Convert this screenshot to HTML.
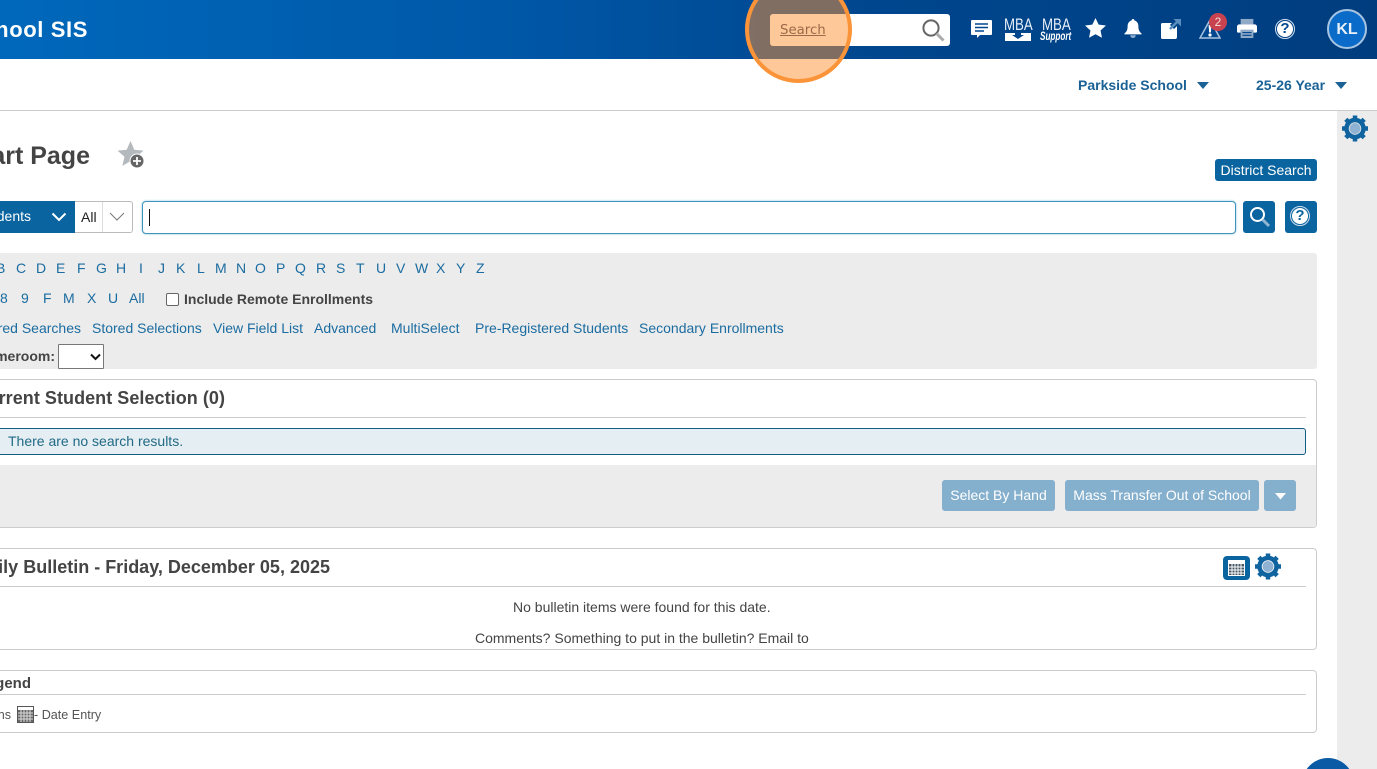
<!DOCTYPE html>
<html><head><meta charset="utf-8"><style>
html,body{margin:0;padding:0;width:1377px;height:769px;overflow:hidden;background:#fff;font-family:"Liberation Sans",sans-serif;color:#444}
#p{position:absolute;left:0;top:0;width:1377px;height:769px;overflow:hidden;background:#fff}
.a{position:absolute;white-space:nowrap}
.l{position:absolute;white-space:nowrap;color:#1b6ca0;font-size:14px;line-height:16px}
.box{position:absolute;border:1px solid #ccc;border-radius:4px;box-sizing:border-box;background:#fff}
.hr{position:absolute;height:1px;background:#ccc}
.btn{position:absolute;background:#84afcd;border-radius:3px;color:#fff;font-size:14px;text-align:center;height:31px;line-height:31px}
svg{position:absolute;display:block}
</style></head><body><div id="p">
<div class="a" style="left:0;top:0;width:1377px;height:59px;background:linear-gradient(90deg,#0068bb 0,#0058a8 500px,#00478f 850px,#003d7f 1377px)"></div>
<div class="a" style="right:1289px;top:16px;font-size:22px;line-height:27px;font-weight:bold;color:#fff;letter-spacing:.6px">School SIS</div>

<div class="a" style="left:770px;top:14px;width:180px;height:32px;background:#fff;border-radius:3px"></div>
<svg style="left:920px;top:17px" width="26" height="26" viewBox="0 0 26 26"><circle cx="11" cy="11" r="7.600" fill="none" stroke="#666" stroke-width="2"/><path d="M16.500 16.500l7 7" stroke="#aaa" stroke-width="3"/></svg>

<svg style="left:971px;top:20px" width="21" height="19" viewBox="0 0 21 19"><path d="M1 0h19a1 1 0 0 1 1 1v13a1 1 0 0 1-1 1H9l-3 3v-3H1a1 1 0 0 1-1-1V1a1 1 0 0 1 1-1z" fill="#fff"/><path d="M4 4h13M4 7.500h13M4 11h9" stroke="#00478f" stroke-width="1.600"/></svg>
<div class="a" style="left:1004px;top:16px;color:#e6eff8;font-size:17px;line-height:17px;transform:scaleX(.78);transform-origin:0 0">MBA</div>
<svg style="left:1005px;top:33px" width="26" height="8" viewBox="0 0 26 8"><rect width="26" height="8" fill="#fff"/><path d="M10 0h6v2h3l-6 4-6-4h3z" fill="#00478f"/></svg>
<div class="a" style="left:1042px;top:16px;color:#e6eff8;font-size:17px;line-height:17px;transform:scaleX(.78);transform-origin:0 0">MBA</div>
<div class="a" style="left:1040px;top:30px;color:#fff;font-size:12px;line-height:13px;font-weight:bold;font-style:italic;transform:scaleX(.68);transform-origin:0 0">Support</div>

<svg style="left:1085px;top:18px" width="21" height="20" viewBox="0 0 22 21"><path d="M11 0l3.300 7 7.700.9-5.700 5.200 1.500 7.600L11 17l-6.800 3.700 1.500-7.600L0 7.900 7.700 7z" fill="#fff"/></svg>
<svg style="left:1124px;top:18px" width="18" height="21" viewBox="0 0 20 21"><path d="M10 0c1 0 1.500.7 1.500 1.500C14.500 2.300 16 5 16 8c0 4 1 6 3.500 8v1H.5v-1C3 14 4 12 4 8c0-3 1.500-5.700 4.500-6.500C8.500.7 9 0 10 0z" fill="#fff"/><path d="M7 18h6c0 2-1.300 3-3 3s-3-1-3-3z" fill="#8fb0d0"/></svg>
<svg style="left:1160px;top:18px" width="22" height="22" viewBox="0 0 22 22"><path d="M2.500 5H12l-2 2 4 4 3-3v11a2 2 0 0 1-2 2H2.500A1.500 1.500 0 0 1 1 19.500v-13A1.500 1.500 0 0 1 2.500 5z" fill="#fff"/><path d="M10 11l9-9" stroke="#5a8ebf" stroke-width="2.500"/><path d="M13.500 1H21v7.500z" fill="#5a8ebf"/></svg>
<svg style="left:1199px;top:18px" width="22" height="21" viewBox="0 0 22 21"><path d="M11 2L1 20h20z" fill="#00478f" stroke="#a9c4de" stroke-width="1.500"/><path d="M9.600 7h2.800l-.5 7.500h-1.800z" fill="#fff"/><circle cx="11" cy="17" r="1.600" fill="#fff"/></svg>
<div class="a" style="left:1209px;top:13px;width:18px;height:18px;border-radius:50%;background:#c8434f;color:#f6dcdc;font-size:12px;line-height:18px;text-align:center">2</div>
<svg style="left:1237px;top:18px" width="20" height="21" viewBox="0 0 22 21"><path d="M4 0h14v6H4z" fill="#8fa9c6"/><path d="M2.500 6h17A2.500 2.500 0 0 1 22 8.500V14a1 1 0 0 1-1 1h-3v-3H4v3H1a1 1 0 0 1-1-1V8.500A2.500 2.500 0 0 1 2.500 6z" fill="#fff"/><path d="M4 12h14v9H4z" fill="#8fa9c6"/><path d="M6 15h10M6 18h10" stroke="#00478f" stroke-width="1.200"/></svg>
<div class="a" style="left:1275px;top:19px;width:20px;height:20px;box-sizing:border-box;border:1px solid #cfe0ef;padding:1px;border-radius:50%"><div style="width:16px;height:16px;border-radius:50%;background:#fff;color:#00478f;font-weight:bold;font-size:15px;line-height:16px;text-align:center">?</div></div>
<div class="a" style="left:1327px;top:9px;width:40px;height:40px;box-sizing:border-box;border:2px solid #a7c5e2;border-radius:50%;background:#0a6bc8;color:#e8f1fa;font-weight:bold;font-size:16px;line-height:37px;text-align:center">KL</div>

<div class="a" style="left:1078px;top:77px;color:#1a6296;font-size:14px;font-weight:bold;line-height:16px">Parkside School</div>
<svg style="left:1197px;top:81px" width="12" height="8"><path d="M0 1h12L6 8z" fill="#1a6296"/></svg>
<div class="a" style="left:1256px;top:77px;color:#1a6296;font-size:14px;font-weight:bold;line-height:16px">25-26 Year</div>
<svg style="left:1335px;top:81px" width="12" height="8"><path d="M0 1h12L6 8z" fill="#1a6296"/></svg>
<div class="a" style="left:0;top:110px;width:1377px;height:1px;background:#ccc"></div>
<div class="a" style="left:1337px;top:111px;width:40px;height:658px;background:#ececec"></div>
<svg style="left:1342px;top:115px" width="26" height="27" viewBox="0 0 26 26"><circle cx="13" cy="13" r="8.500" fill="none" stroke="#0f649f" stroke-width="4.500"/><circle cx="13" cy="13" r="5.500" fill="#8fb1d2"/><g stroke="#0f649f" stroke-width="4.500"><path d="M13 0v5M13 21v5M0 13h5M21 13h5M3.800 3.800l3.500 3.500M18.700 18.700l3.500 3.500M3.800 22.200l3.500-3.500M18.700 7.300l3.500-3.500"/></g></svg>

<div class="a" style="right:1287px;top:141px;font-size:25px;line-height:30px;font-weight:bold;color:#444">Start Page</div>
<svg style="left:117px;top:141px" width="29" height="28" viewBox="0 0 29 28"><path d="M13.500 0l3.800 8.700 9.200.9-7 6.100 2.100 9.200-8.100-4.800-8.100 4.800 2.100-9.200-7-6.100 9.200-.9z" fill="#b3b9bd"/><circle cx="20" cy="20" r="7" fill="#666" stroke="#fff" stroke-width="1"/><path d="M20 16v8M16 20h8" stroke="#fff" stroke-width="1.800"/></svg>
<div class="a" style="left:1215px;top:159px;width:102px;height:22px;background:#0a649f;border-radius:3px;color:#fff;font-size:14px;line-height:22px;text-align:center">District Search</div>

<div class="a" style="left:0;top:201px;width:75px;height:32px;background:#0a649f"></div>
<div class="a" style="right:1346px;top:208px;color:#fff;font-size:14px;line-height:16px">Students</div>
<svg style="left:51px;top:212px" width="16" height="10"><path d="M1.500 1.500L8 8l6.500-6.500" fill="none" stroke="#fff" stroke-width="2"/></svg>
<div class="a" style="left:75px;top:201px;width:58px;height:32px;box-sizing:border-box;border:1px solid #bbb;border-left:0;border-radius:0 3px 3px 0;background:#fff"></div>
<div class="a" style="left:81px;top:209px;color:#222;font-size:14px;line-height:16px">All</div>
<div class="a" style="left:102px;top:202px;width:1px;height:30px;background:#ddd"></div>
<svg style="left:109px;top:212px" width="16" height="10"><path d="M1 1l7 7 7-7" fill="none" stroke="#777" stroke-width="1"/></svg>
<div class="a" style="left:142px;top:201px;width:1094px;height:33px;box-sizing:border-box;border:1px solid #3f93bd;box-shadow:0 0 2px #8cc3dd;border-radius:4px;background:#fff"></div>
<div class="a" style="left:149px;top:209px;width:1px;height:17px;background:#111"></div>
<div class="a" style="left:1243px;top:201px;width:32px;height:32px;background:#0a649f;border-radius:3px"></div>
<svg style="left:1248px;top:205px" width="24" height="24" viewBox="0 0 24 24"><circle cx="9.500" cy="9.500" r="6.500" fill="none" stroke="#fff" stroke-width="2"/><path d="M14.500 14.500l6.500 6.500" stroke="#8fb7d4" stroke-width="3"/></svg>
<div class="a" style="left:1285px;top:201px;width:32px;height:32px;background:#0a649f;border-radius:3px"></div>
<div class="a" style="left:1290px;top:206px;width:20px;height:20px;box-sizing:border-box;border:1px solid #cfe0ef;border-radius:50%"><div style="margin:1px;width:16px;height:16px;border-radius:50%;background:#fff;color:#0a649f;font-weight:bold;font-size:15px;line-height:16px;text-align:center">?</div></div>

<div class="a" style="left:0;top:253px;width:1317px;height:116px;background:#ececec;border-radius:0 3px 3px 0"></div>
<div class="l" style="left:-4px;top:260px">B</div><div class="l" style="left:16px;top:260px">C</div><div class="l" style="left:36px;top:260px">D</div><div class="l" style="left:56px;top:260px">E</div><div class="l" style="left:77px;top:260px">F</div><div class="l" style="left:96px;top:260px">G</div><div class="l" style="left:116px;top:260px">H</div><div class="l" style="left:139px;top:260px">I</div><div class="l" style="left:158px;top:260px">J</div><div class="l" style="left:176px;top:260px">K</div><div class="l" style="left:197px;top:260px">L</div><div class="l" style="left:215px;top:260px">M</div><div class="l" style="left:236px;top:260px">N</div><div class="l" style="left:255px;top:260px">O</div><div class="l" style="left:276px;top:260px">P</div><div class="l" style="left:295px;top:260px">Q</div><div class="l" style="left:316px;top:260px">R</div><div class="l" style="left:336px;top:260px">S</div><div class="l" style="left:356px;top:260px">T</div><div class="l" style="left:376px;top:260px">U</div><div class="l" style="left:396px;top:260px">V</div><div class="l" style="left:415px;top:260px">W</div><div class="l" style="left:436px;top:260px">X</div><div class="l" style="left:456px;top:260px">Y</div><div class="l" style="left:476px;top:260px">Z</div>
<div class="l" style="left:0;top:290px">8</div><div class="l" style="left:21px;top:290px">9</div><div class="l" style="left:43px;top:290px">F</div><div class="l" style="left:63px;top:290px">M</div><div class="l" style="left:87px;top:290px">X</div><div class="l" style="left:108px;top:290px">U</div><div class="l" style="left:129px;top:290px">All</div>
<div class="a" style="left:166px;top:293px;width:13px;height:13px;box-sizing:border-box;border:1px solid #666;border-radius:2px;background:#fff"></div>
<div class="a" style="left:184px;top:291px;font-size:14px;line-height:16px;font-weight:bold;color:#444">Include Remote Enrollments</div>
<div class="l" style="right:1296px;top:320px">Stored Searches</div><div class="l" style="left:92px;top:320px">Stored Selections</div><div class="l" style="left:213px;top:320px">View Field List</div><div class="l" style="left:314px;top:320px">Advanced</div><div class="l" style="left:391px;top:320px">MultiSelect</div><div class="l" style="left:475px;top:320px">Pre-Registered Students</div><div class="l" style="left:639px;top:320px">Secondary Enrollments</div>
<div class="a" style="right:1322px;top:348px;font-size:14px;line-height:16px;font-weight:bold;color:#444">Homeroom:</div>
<div class="a" style="left:58px;top:344px;width:46px;height:25px;box-sizing:border-box;border:1px solid #777;background:#fff;border-radius:1px"></div>
<svg style="left:90px;top:353px" width="11" height="8"><path d="M1 1.500l4.500 4.500L10 1.500" fill="none" stroke="#111" stroke-width="2"/></svg>

<div class="box" style="left:-10px;top:379px;width:1327px;height:149px"></div>
<div class="a" style="right:1152px;top:388px;font-size:18px;line-height:20px;font-weight:bold;color:#444;letter-spacing:.05px">Current Student Selection (0)</div>
<div class="hr" style="left:0;top:417px;width:1306px"></div>
<div class="a" style="left:-10px;top:428px;width:1316px;height:27px;box-sizing:border-box;background:#e5eef3;border:1px solid #115f82;border-radius:3px"></div>
<div class="a" style="left:8px;top:433px;font-size:14px;line-height:16px;color:#216a85">There are no search results.</div>
<div class="a" style="left:0;top:465px;width:1316px;height:62px;background:#ececec;border-radius:0 0 4px 0"></div>
<div class="btn" style="left:942px;top:480px;width:113px">Select By Hand</div>
<div class="btn" style="left:1065px;top:480px;width:194px">Mass Transfer Out of School</div>
<div class="btn" style="left:1264px;top:480px;width:32px"></div>
<svg style="left:1275px;top:493px" width="11" height="7"><path d="M0 0h11L5.500 6.500z" fill="#fff"/></svg>

<div class="box" style="left:-10px;top:548px;width:1327px;height:102px"></div>
<div class="a" style="right:1047px;top:557px;font-size:18px;line-height:20px;font-weight:bold;color:#444">Daily Bulletin - Friday, December 05, 2025</div>
<div class="a" style="left:1223px;top:556px;width:27px;height:24px;background:#0a649f;border-radius:4px"></div>
<svg style="left:1228px;top:560px" width="17" height="16" viewBox="0 0 17 16"><rect width="17" height="16" fill="#fff"/><path d="M1 4h15v11H1z" fill="#456"/><path d="M1 7h15M1 10h15M1 13h15M4 4v11M7 4v11M10 4v11M13 4v11" stroke="#fff" stroke-width="1"/></svg>
<svg style="left:1255px;top:553px" width="26" height="27" viewBox="0 0 26 26"><circle cx="13" cy="13" r="8.500" fill="none" stroke="#0f649f" stroke-width="4.500"/><circle cx="13" cy="13" r="5.500" fill="#8fb1d2"/><g stroke="#0f649f" stroke-width="4.500"><path d="M13 0v5M13 21v5M0 13h5M21 13h5M3.800 3.800l3.500 3.500M18.700 18.700l3.500 3.500M3.800 22.200l3.500-3.500M18.700 7.300l3.500-3.500"/></g></svg>
<div class="hr" style="left:0;top:586px;width:1306px"></div>
<div class="a" style="left:513px;top:599px;font-size:14px;line-height:16px;color:#444">No bulletin items were found for this date.</div>
<div class="a" style="left:475px;top:630px;font-size:14px;line-height:16px;color:#444">Comments? Something to put in the bulletin? Email to</div>

<div class="box" style="left:-10px;top:670px;width:1327px;height:63px"></div>
<div class="a" style="right:1346px;top:675px;font-size:15px;line-height:17px;font-weight:bold;color:#444">Legend</div>
<div class="hr" style="left:0;top:694px;width:1306px"></div>
<div class="a" style="right:1366px;top:708px;font-size:12.600px;line-height:15px;color:#555">Icons</div>
<svg style="left:17px;top:706px" width="17" height="17" viewBox="0 0 17 17"><rect x=".5" y=".5" width="16" height="16" fill="#fff" stroke="#555"/><path d="M1 4h15v12H1z" fill="#666"/><path d="M1 7h15M1 10h15M1 13h15M4 4v12M7 4v12M10 4v12M13 4v12" stroke="#ddd" stroke-width="1"/></svg>
<div class="a" style="left:34px;top:708px;font-size:12.600px;line-height:15px;color:#555">- Date Entry</div>

<svg style="left:1302px;top:758px" width="52" height="11" viewBox="0 0 52 11"><circle cx="26" cy="26" r="26" fill="#0a5aa6"/></svg>

<div class="a" style="left:780px;top:22px;font-family:'DejaVu Sans',sans-serif;font-size:13.300px;line-height:18px;color:#9a6a4a;text-decoration:underline;z-index:3">Search</div>
<div class="a" style="left:745px;top:-24px;width:107px;height:107px;box-sizing:border-box;border:4px solid #fb9338;border-radius:50%;background:rgba(255,145,50,.5);z-index:2"></div>
</div></body></html>
